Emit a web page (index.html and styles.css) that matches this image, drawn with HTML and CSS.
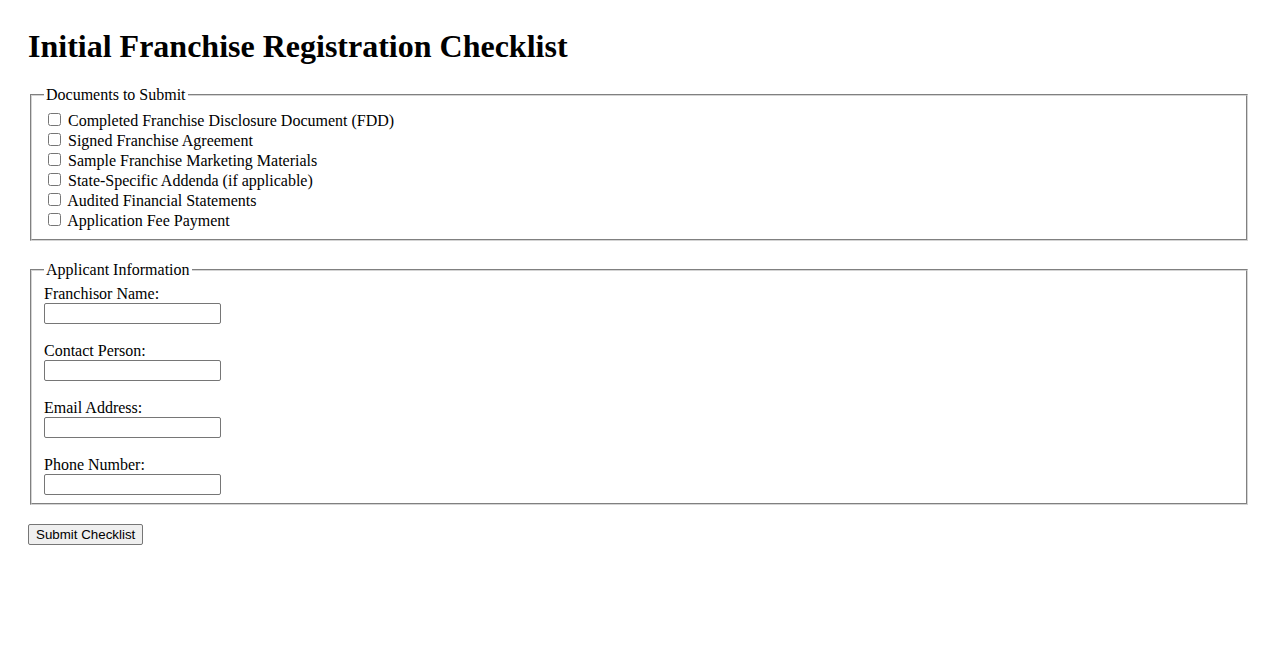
FILE: index.html
```html
<!DOCTYPE html>
<html>
<head>
<meta charset="utf-8">
<title>Initial Franchise Registration Checklist</title>
<link rel="stylesheet" href="styles.css">
</head>
<body>
<h1 class="title">Initial Franchise Registration Checklist</h1>
<form class="form">
  <fieldset class="group group-docs">
    <legend class="legend">Documents to Submit</legend>
    <div class="check-row"><input type="checkbox" class="check" id="c1"> <label for="c1">Completed Franchise Disclosure Document (FDD)</label></div>
    <div class="check-row"><input type="checkbox" class="check" id="c2"> <label for="c2">Signed Franchise Agreement</label></div>
    <div class="check-row"><input type="checkbox" class="check" id="c3"> <label for="c3">Sample Franchise Marketing Materials</label></div>
    <div class="check-row"><input type="checkbox" class="check" id="c4"> <label for="c4">State-Specific Addenda (if applicable)</label></div>
    <div class="check-row"><input type="checkbox" class="check" id="c5"> <label for="c5">Audited Financial Statements</label></div>
    <div class="check-row"><input type="checkbox" class="check" id="c6"> <label for="c6">Application Fee Payment</label></div>
  </fieldset>
  <fieldset class="group group-info">
    <legend class="legend">Applicant Information</legend>
    <div class="field"><label for="f1">Franchisor Name:</label><br><input type="text" class="text-input" id="f1"></div>
    <div class="field"><label for="f2">Contact Person:</label><br><input type="text" class="text-input" id="f2"></div>
    <div class="field"><label for="f3">Email Address:</label><br><input type="text" class="text-input" id="f3"></div>
    <div class="field"><label for="f4">Phone Number:</label><br><input type="text" class="text-input" id="f4"></div>
  </fieldset>
  <button type="submit" class="submit">Submit Checklist</button>
</form>
</body>
</html>
```
FILE: styles.css
```css
html, body {
  background: #ffffff;
}
body {
  margin: 0;
  padding: 28px;
  font-family: "Liberation Serif", "Times New Roman", serif;
  font-size: 16px;
  color: #000000;
}
.title {
  margin: 0 0 21px;
  font-size: 32px;
  font-weight: bold;
}
.form {
  margin: 0;
}
.group {
  margin: 0 2px 20px;
  border: 2px groove #d4d4d4;
}
.group-docs {
  padding: 6px 12px 9px;
}
.group-info {
  padding: 6px 12px 8px;
  margin-bottom: 19px;
}
.legend {
  padding: 0 2px;
}
.check-row {
  height: 20px;
  line-height: 20px;
}
.check {
  width: 13px;
  height: 13px;
  margin: 3px 3px 3px 4px;
}
.field {
  margin-bottom: 18px;
}
.field:last-child {
  margin-bottom: 0;
}
.text-input {
  width: 177px;
  height: 21px;
  box-sizing: border-box;
  padding: 1px 2px;
  font-family: "Liberation Sans", Arial, sans-serif;
  font-size: 13.33px;
  border: 1px solid #767676;
  border-radius: 2px;
  margin: 0;
}
.submit {
  font-family: "Liberation Sans", Arial, sans-serif;
  font-size: 13.33px;
  padding: 1px 7px;
  margin: 0;
  height: 21px;
  border: 1px solid #767676;
  border-radius: 2px;
  background: #efefef;
  color: #000;
}
```
